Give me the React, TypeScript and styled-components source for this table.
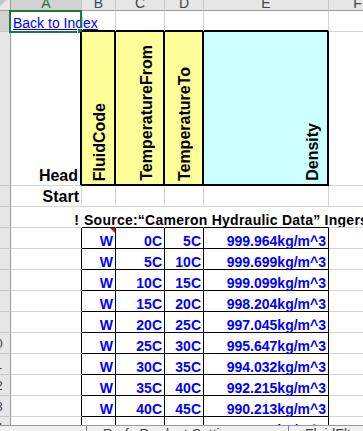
import React from 'react'
import styled, { createGlobalStyle } from 'styled-components'

const GlobalStyle = createGlobalStyle`
  html, body {
    margin: 0;
    padding: 0;
    background: #fff;
  }
  body {
    font-family: "Liberation Sans", Arial, sans-serif;
  }
  * {
    box-sizing: border-box;
  }
`

const BLUE = '#0000ff'
const GREEN = '#217346'

type Edge = 'grid' | 'thin' | 'thick' | 'none'

const edge = (e: Edge = 'grid') => {
  switch (e) {
    case 'thin':
      return '1px solid #000'
    case 'thick':
      return '2px solid #000'
    case 'none':
      return '1px solid transparent'
    default:
      return '1px solid #d4d4d4'
  }
}

const Screen = styled.div`
  width: 363px;
  height: 431px;
  overflow: hidden;
  display: flex;
  flex-direction: column;
`

const Sheet = styled.div`
  flex: none;
  width: 363px;
  height: 425px;
  overflow: hidden;
  display: grid;
  grid-template-columns: 11px 71px 34px 49px 39px 125px 58px;
  grid-template-rows: 11px 21px 154px 21px 21px repeat(10, 21px);
  background: #fff;
`

const Corner = styled.div`
  background: linear-gradient(135deg, #c4c4c4 0 35%, #e6e6e6 35%);
  border-right: 1px solid #9b9b9b;
  border-bottom: 1px solid #9b9b9b;
`

const ColHead = styled.div<{ $active?: boolean }>`
  display: flex;
  justify-content: center;
  align-items: flex-start;
  overflow: hidden;
  background: ${p => (p.$active ? '#d2d2d2' : '#e6e6e6')};
  border-right: 1px solid #c6c6c6;
  border-bottom: 1px solid #9b9b9b;
  color: ${p => (p.$active ? GREEN : '#444')};
  font-size: 14px;
  line-height: 6px;
`

const RowHead = styled.div<{ $active?: boolean }>`
  display: flex;
  align-items: center;
  justify-content: flex-end;
  overflow: hidden;
  background: ${p => (p.$active ? '#d2d2d2' : '#e6e6e6')};
  border-right: 1px solid #9b9b9b;
  border-bottom: 1px solid #c6c6c6;
  color: #444;
  font-size: 13px;
`

const RowNum = styled.span`
  flex: none;
  width: 29px;
  text-align: center;
`

const Cell = styled.div<{
  $right?: Edge
  $bottom?: Edge
  $align?: 'left' | 'right'
  $color?: string
}>`
  position: relative;
  display: flex;
  align-items: flex-end;
  justify-content: ${p => (p.$align === 'right' ? 'flex-end' : 'flex-start')};
  min-width: 0;
  padding: 0 2px;
  border-right: ${p => edge(p.$right)};
  border-bottom: ${p => edge(p.$bottom)};
  color: ${p => p.$color ?? '#000'};
  font-size: 14px;
  line-height: 14px;
  font-weight: bold;
  white-space: nowrap;
`

const Label = styled(Cell)`
  font-size: 16px;
  line-height: 16px;
  padding-bottom: 1px;
`

const SourceNote = styled.span`
  letter-spacing: 0.25px;
`

const HeadCell = styled.div<{ $bg: string; $inset: number }>`
  display: flex;
  justify-content: flex-end;
  align-items: flex-end;
  padding: 0 ${p => p.$inset}px 3px 0;
  background: ${p => p.$bg};
  border-right: 2px solid #000;
  border-bottom: 2px solid #000;
`

const Vertical = styled.span`
  writing-mode: vertical-rl;
  transform: rotate(180deg);
  font-size: 16px;
  line-height: 16px;
  font-weight: bold;
  white-space: nowrap;
  color: #000;
`

const IndexLink = styled.a`
  color: ${BLUE};
  text-decoration: underline;
  font-weight: normal;
  padding-bottom: 1px;
`

const Selection = styled.div`
  position: absolute;
  top: -1px;
  right: -1px;
  bottom: -2px;
  left: -2px;
  border: 2px solid ${GREEN};
  pointer-events: none;
`

const Handle = styled.div`
  position: absolute;
  right: -3px;
  bottom: -3px;
  width: 6px;
  height: 6px;
  background: ${GREEN};
  border: 1px solid #fff;
`

const Note = styled.span`
  position: absolute;
  top: 0;
  right: 0;
  width: 0;
  height: 0;
  border-top: 5px solid #f00;
  border-left: 5px solid transparent;
`

const TabBar = styled.div`
  flex: none;
  height: 6px;
  overflow: hidden;
  display: flex;
  background: #f0f0f0;
  border-top: 1px solid #9b9b9b;
`

const TabNav = styled.div`
  flex: none;
  width: 86px;
`

const Tab = styled.div<{ $width: number }>`
  flex: none;
  width: ${p => p.$width}px;
  padding-left: 16px;
  border-left: 1px solid #7a7a7a;
  color: #444;
  font-size: 14px;
  line-height: 16px;
  white-space: nowrap;
`

const columns = ['A', 'B', 'C', 'D', 'E', 'F']

const headers = [
  { text: 'FluidCode', bg: '#ffff99', inset: 6 },
  { text: 'TemperatureFrom', bg: '#ffff99', inset: 8 },
  { text: 'TemperatureTo', bg: '#ffff99', inset: 9 },
  { text: 'Density', bg: '#ccffff', inset: 6 },
]

const densities = [
  ['0C', '5C', '999.964'],
  ['5C', '10C', '999.699'],
  ['10C', '15C', '999.099'],
  ['15C', '20C', '998.204'],
  ['20C', '25C', '997.045'],
  ['25C', '30C', '995.647'],
  ['30C', '35C', '994.032'],
  ['35C', '40C', '992.215'],
  ['40C', '45C', '990.213'],
  ['45C', '50C', '988.037'],
]

export default function App() {
  return (
    <Screen>
      <GlobalStyle />
      <Sheet>
        <Corner />
        {columns.map(c => (
          <ColHead key={c} $active={c === 'A'}>
            {c}
          </ColHead>
        ))}

        <RowHead $active>
          <RowNum>1</RowNum>
        </RowHead>
        <Cell>
          <IndexLink href="#">Back to Index</IndexLink>
          <Selection>
            <Handle />
          </Selection>
        </Cell>
        <Cell $bottom="thick" />
        <Cell $bottom="thick" />
        <Cell $bottom="thick" />
        <Cell $bottom="thick" />
        <Cell />

        <RowHead>
          <RowNum>2</RowNum>
        </RowHead>
        <Label $align="right" $right="thick">
          Head
        </Label>
        {headers.map(h => (
          <HeadCell key={h.text} $bg={h.bg} $inset={h.inset}>
            <Vertical>{h.text}</Vertical>
          </HeadCell>
        ))}
        <Cell />

        <RowHead>
          <RowNum>3</RowNum>
        </RowHead>
        <Label $align="right">Start</Label>
        <Cell />
        <Cell />
        <Cell />
        <Cell />
        <Cell />

        <RowHead>
          <RowNum>4</RowNum>
        </RowHead>
        <Cell $align="right" $right="none">
          !
        </Cell>
        <Cell $right="none" $bottom="thin">
          <SourceNote>Source:“Cameron Hydraulic Data” Ingersoll-Rand</SourceNote>
        </Cell>
        <Cell $right="none" $bottom="thin" />
        <Cell $right="none" $bottom="thin" />
        <Cell $right="none" $bottom="thin" />
        <Cell $right="none" />

        {densities.map(([from, to, density], i) => (
          <React.Fragment key={from}>
            <RowHead>
              <RowNum>{i + 5}</RowNum>
            </RowHead>
            <Cell $right="thin" />
            <Cell $right="thin" $bottom="thin" $align="right" $color={BLUE}>
              W{i === 0 && <Note />}
            </Cell>
            <Cell $right="thin" $bottom="thin" $align="right" $color={BLUE}>
              {from}
            </Cell>
            <Cell $right="thin" $bottom="thin" $align="right" $color={BLUE}>
              {to}
            </Cell>
            <Cell $right="thin" $bottom="thin" $align="right" $color={BLUE}>
              {density}kg/m^3
            </Cell>
            <Cell />
          </React.Fragment>
        ))}
      </Sheet>
      <TabBar>
        <TabNav />
        <Tab $width={202}>Prefs Product Settings</Tab>
        <Tab $width={120}>FluidFlt</Tab>
      </TabBar>
    </Screen>
  )
}
